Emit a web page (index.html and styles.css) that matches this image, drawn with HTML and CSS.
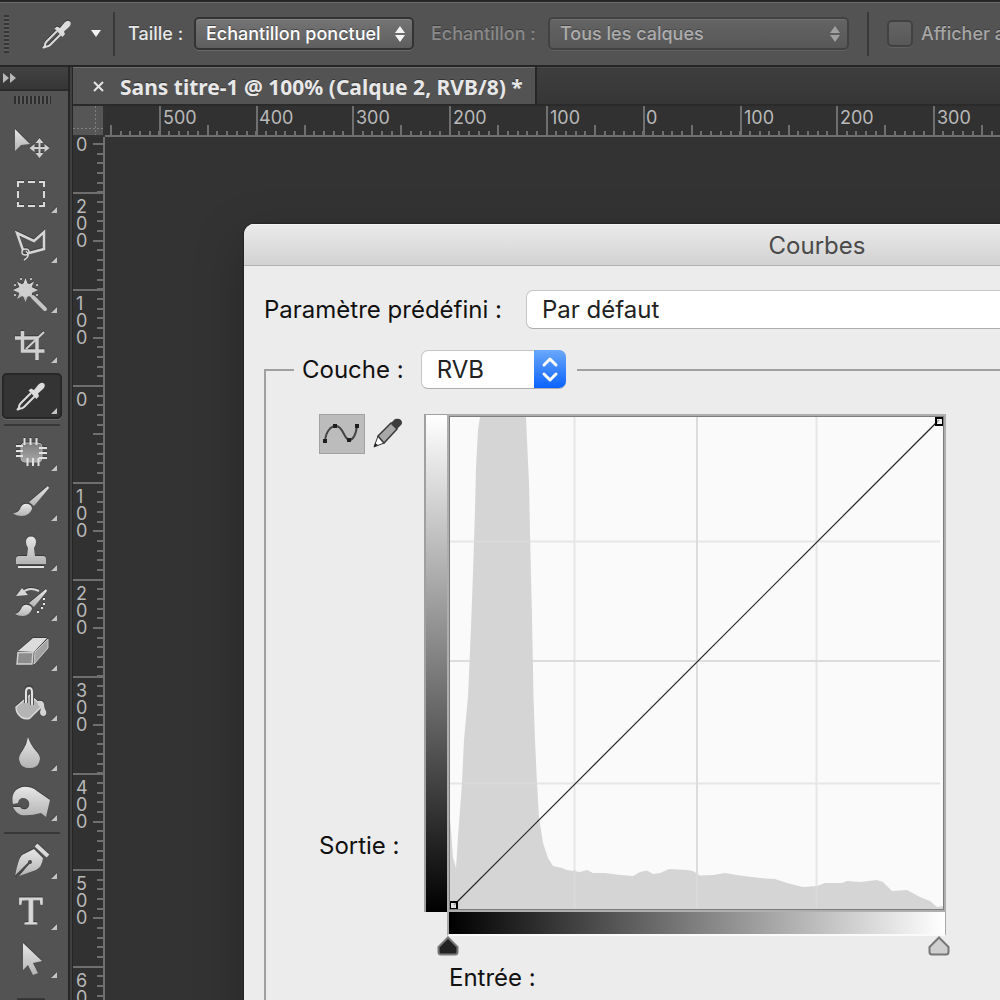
FILE: index.html
```html
<!DOCTYPE html>
<html lang="fr">
<head>
<meta charset="utf-8">
<title>Courbes</title>
<link rel="stylesheet" href="styles.css">
</head>
<body>
<svg class="defs" aria-hidden="true">
  <defs>
    <linearGradient id="metal" x1="0" y1="0" x2="0" y2="1">
      <stop offset="0" stop-color="#e6e6e6"/><stop offset="1" stop-color="#b4b4b4"/>
    </linearGradient>
    <linearGradient id="metalDim" x1="0" y1="0" x2="0" y2="1">
      <stop offset="0" stop-color="#7c7c7c"/><stop offset="1" stop-color="#a8a8a8"/>
    </linearGradient>
    <symbol id="pipette" viewBox="0 0 30 30">
      <path d="M15 12 4.5 22.500Q3 24 3 26.500L1.500 28.500 4.500 27.500Q6.500 27.500 8 26L18.500 15.500" fill="none" stroke="#dcdcdc" stroke-width="2" stroke-linejoin="round"/>
      <path d="M12.500 9.500 15 7.500 18 9 22.500 3.500Q25.500 .5 28 2.500 30 5 27 8L22 12.500 23 15 20.500 18Z" fill="#dcdcdc"/>
    </symbol>
    <symbol id="more" viewBox="0 0 6 6"><path d="M6 0V6H0Z" fill="#c4c4c4"/></symbol>
  </defs>
</svg>

<header class="options">
  <span class="grip-v"></span>
  <button class="current-tool" aria-label="Pipette"><svg width="30" height="30"><use href="#pipette"/></svg></button>
  <button class="tool-menu" aria-label="Formes prédéfinies"><svg width="10" height="7"><path d="M0 0H10L5 7Z" fill="#f2f2f2"/></svg></button>
  <span class="divider"></span>
  <label class="opt-label" for="taille">Taille :</label>
  <span class="opt-select opt-select-size">
    <select id="taille"><option>Echantillon ponctuel</option></select>
    <svg class="updown" width="10" height="16"><path d="M0 7 5 0 10 7ZM0 9H10L5 16Z"/></svg>
  </span>
  <label class="opt-label off" for="echantillon">Echantillon :</label>
  <span class="opt-select opt-select-sample off">
    <select id="echantillon" disabled><option>Tous les calques</option></select>
    <svg class="updown" width="10" height="16"><path d="M0 7 5 0 10 7ZM0 9H10L5 16Z"/></svg>
  </span>
  <span class="divider"></span>
  <label class="opt-check"><input type="checkbox" disabled>Afficher anneau d’échantillonnage</label>
</header>

<div class="main">
  <nav class="toolbox" aria-label="Outils">
    <button class="collapse" aria-label="Agrandir le panneau"><svg width="13" height="10"><path d="M0 0 6 5 0 10ZM7 0 13 5 7 10Z" fill="#b8b8b8"/></svg></button>
    <span class="grip-h"></span>
    <button class="tool" aria-label="Déplacement"><svg width="60" height="46">
      <path d="M13 6V28L19 22 28 21Z" fill="url(#metal)"/>
      <path d="M37.500 17V33M29.500 25H45.500" stroke="#d0d0d0" stroke-width="2"/>
      <path d="M37.500 15 41.500 20H33.500ZM37.500 35 41.500 30H33.500ZM27.500 25 32.500 21V29ZM47.500 25 42.500 21V29Z" fill="#d0d0d0"/>
    </svg></button>
    <button class="tool" aria-label="Rectangle de sélection"><svg width="60" height="46">
      <path d="M16 14V9H22M26 9H33M37 9H42V14M42 18V25M42 29V33H37M33 33H26M22 33H16V29M16 25V18" fill="none" stroke="#dadada" stroke-width="2"/>
      <use href="#more" x="49" y="34" width="6" height="6"/>
    </svg></button>
    <button class="tool" aria-label="Lasso polygonal"><svg width="60" height="46">
      <path d="M21 27 15 10 32 18 42 9V26L27 30" fill="none" stroke="#d6d6d6" stroke-width="2.500"/>
      <path d="M20 29Q20 26 23.500 26T27 29 23.500 32 20 29ZM24 28Q29 33 22 37" fill="none" stroke="#d6d6d6" stroke-width="1.500"/>
      <use href="#more" x="49" y="34" width="6" height="6"/>
    </svg></button>
    <button class="tool" aria-label="Baguette magique"><svg width="60" height="46">
      <path d="M23.500 5 26 12 32 8.500 29.500 14 36 17 29.500 20 32 26 26 22.500 23.500 29 21 22.500 15 26 17.500 20 11 17 17.500 14 15 8.500 21 12Z" fill="url(#metal)"/>
      <circle cx="23.500" cy="17" r="7" fill="#cfcfcf"/>
      <path d="M31 24 43 36" stroke="#c4c4c4" stroke-width="4" stroke-linecap="round"/>
      <path d="M18 6h2M28 6h2M34 12h2M34 22h2M12 12h2M12 22h2" stroke="#dcdcdc" stroke-width="1.500"/>
      <use href="#more" x="49" y="34" width="6" height="6"/>
    </svg></button>
    <button class="tool" aria-label="Recadrage"><svg width="60" height="46">
      <path d="M20.500 8V28H42.500M13 15H35V37" fill="none" stroke="#d0d0d0" stroke-width="3.500"/>
      <path d="M42 9 24 26" stroke="#d0d0d0" stroke-width="2"/>
      <use href="#more" x="49" y="34" width="6" height="6"/>
    </svg></button>
    <button class="tool active" aria-label="Pipette" aria-pressed="true"><svg width="60" height="46">
      <use href="#pipette" x="14" y="8" width="30" height="30"/>
      <use href="#more" x="49" y="35" width="6" height="6"/>
    </svg></button>
    <span class="tool-rule"></span>
    <button class="tool" aria-label="Pièce"><svg width="60" height="46">
      <rect x="19" y="12" width="21" height="19" rx="4" fill="url(#metalDim)" stroke="#b5b5b5"/>
      <path d="M22.500 7V14M28.500 7V14M34.500 7V14M25.500 27V35M31 27V35M36.500 27V35M14 15H21M14 20H21M14 25H21M37 17H45M37 22H45M37 27H45" stroke="#e2e2e2" stroke-width="2"/>
      <use href="#more" x="49" y="34" width="6" height="6"/>
    </svg></button>
    <button class="tool" aria-label="Pinceau"><svg width="60" height="46">
      <path d="M46 5 47 7 32 25 27 21Z" fill="url(#metal)"/>
      <path d="M26 23Q30 24 30 28 27 35 20 35 14 35 11 32 16 32 18 28 20 22 26 23Z" fill="url(#metal)"/>
      <use href="#more" x="49" y="34" width="6" height="6"/>
    </svg></button>
    <button class="tool" aria-label="Tampon"><svg width="60" height="46">
      <path d="M29 5.500Q34 5.500 34 11 34 14 32 17L33 25H41Q44 25 44 28V33H14V28Q14 25 17 25H25L26 17Q24 14 24 11 24 5.500 29 5.500Z" fill="url(#metal)"/>
      <path d="M16 36H42" stroke="#e4e4e4" stroke-width="2"/>
      <use href="#more" x="49" y="34" width="6" height="6"/>
    </svg></button>
    <button class="tool" aria-label="Forme d’historique"><svg width="60" height="46">
      <path d="M44 8 45 10 32 26 27 22Z" fill="url(#metal)"/>
      <path d="M26 24Q30 25 30 28 27 35 21 35 16 35 13 33 17 32 19 28 21 23 26 24Z" fill="url(#metal)"/>
      <path d="M20 12Q27 5 37 10" fill="none" stroke="#d8d8d8" stroke-width="2"/>
      <path d="M20 7 14 15 26 14Z" fill="#d8d8d8"/>
      <path d="M41 18h2M41 23h2M39 27h2M35 31h2" stroke="#e8e8e8" stroke-width="2"/>
      <use href="#more" x="49" y="34" width="6" height="6"/>
    </svg></button>
    <button class="tool" aria-label="Gomme"><svg width="60" height="46">
      <path d="M16 20 31 7H45L32 21Z" fill="#dcdcdc"/>
      <path d="M46 8V17L32 33 33 21Z" fill="#a2a2a2" stroke="#cdcdcd"/>
      <path d="M16 21.500H31L30 33H15Z" fill="#8c8c8c" stroke="#cfcfcf" stroke-width="1.500"/>
      <use href="#more" x="49" y="34" width="6" height="6"/>
    </svg></button>
    <button class="tool" aria-label="Pot de peinture"><svg width="60" height="46">
      <path d="M28 14 14 26Q14 32 19 36 24 39 28 37L40 25Z" fill="#b4b4b4" stroke="#dadada" stroke-width="1.500"/>
      <path d="M24 22V11Q24 7 27 7T30 11V24" fill="none" stroke="#555" stroke-width="4"/>
      <path d="M24 22V11Q24 7 27 7T30 11V24" fill="none" stroke="#e2e2e2" stroke-width="2"/>
      <path d="M36 20Q41 19 42 23 42 27 44 30 45 34 42 35 38 35 38 31 40 26 36 24Z" fill="#d4d4d4"/>
      <use href="#more" x="49" y="34" width="6" height="6"/>
    </svg></button>
    <button class="tool" aria-label="Goutte d’eau"><svg width="60" height="46">
      <path d="M26 6Q28 13 34 20 38 24 38 28 37 37 27.500 37 18 37 17 28 17 24 21 19 25 13 26 6Z" fill="url(#metal)"/>
      <use href="#more" x="49" y="34" width="6" height="6"/>
    </svg></button>
    <button class="tool" aria-label="Densité +"><svg width="60" height="46">
      <path d="M20 6Q29 5 35 10L48 19 44 36 39 32Q28 35 19 34 13 31 11 26H18Q20 29 24 28 28 26 27 21 25 17 21 17 17 17 16 22L11 23Q9 14 14 9 17 7 20 6Z" fill="url(#metal)"/>
      <use href="#more" x="49" y="34" width="6" height="6"/>
    </svg></button>
    <span class="tool-rule"></span>
    <button class="tool" aria-label="Plume"><svg width="60" height="46">
      <path d="M13 37Q16 20 20 16L32 10 41 19Q40 28 34 31L17 37 28 24" fill="url(#metal)"/>
      <path d="M13 38 28 23" stroke="#4a4a4a" stroke-width="2"/><circle cx="28" cy="23" r="2" fill="#4a4a4a"/>
      <path d="M34 6 46 17" stroke="#dadada" stroke-width="4"/>
      <use href="#more" x="49" y="34" width="6" height="6"/>
    </svg></button>
    <button class="tool" aria-label="Texte"><svg width="60" height="46">
      <text class="tool-letter" x="29" y="35" text-anchor="middle">T</text>
      <use href="#more" x="49" y="35" width="6" height="6"/>
    </svg></button>
    <button class="tool" aria-label="Sélection de tracé"><svg width="60" height="46">
      <path d="M21 4V31L26 26 31 36 36 34 31 24 40 22Z" fill="url(#metal)"/>
      <use href="#more" x="49" y="33" width="6" height="6"/>
    </svg></button>
    <button class="tool" aria-label="Rectangle"><svg width="60" height="46"><rect x="16" y="11" width="26" height="24" fill="#c8c8c8" stroke="#333" stroke-width="2"/></svg></button>
  </nav>

  <main class="workspace">
    <div class="tabs">
      <div class="tab">
        <button class="tab-close" aria-label="Fermer"><svg width="11" height="11"><path d="M1 1 10 10M10 1 1 10" stroke="#e4e4e4" stroke-width="2"/></svg></button>
        <span>Sans titre-1 @ 100% (Calque 2, RVB/8) *</span>
      </div>
    </div>
    <div class="document">
      <div class="corner"></div>
      <svg class="ruler ruler-x" height="31">
        <g class="ticks">
          <path d="M-43 14.500H3000" stroke-width="29" stroke-dasharray="2 94.800"/>
          <path d="M5 24H3000" stroke-width="10" stroke-dasharray="2 94.800"/>
          <path d="M5 27H3000" stroke-width="5" stroke-dasharray="2 7.680"/>
          <path d="M0 30H3000" stroke-width="2"/>
        </g>
        <text x="58" y="18">500</text><text x="154" y="18">400</text><text x="251" y="18">300</text>
        <text x="348" y="18">200</text><text x="445" y="18">100</text><text x="541" y="18">0</text>
        <text x="639" y="18">100</text><text x="735" y="18">200</text><text x="832" y="18">300</text>
      </svg>
      <svg class="ruler ruler-y" width="32">
        <g class="ticks">
          <path d="M15 -42V3000" stroke-width="30" stroke-dasharray="2 94.800"/>
          <path d="M25 6V3000" stroke-width="10" stroke-dasharray="2 94.800"/>
          <path d="M27 6V3000" stroke-width="6" stroke-dasharray="2 7.680"/>
          <path d="M31 0V3000" stroke-width="2"/>
        </g>
        <text><tspan x="3" y="14">0</tspan></text>
        <text><tspan x="3" y="76">2</tspan><tspan x="3" y="93">0</tspan><tspan x="3" y="110">0</tspan></text>
        <text><tspan x="3" y="173">1</tspan><tspan x="3" y="190">0</tspan><tspan x="3" y="207">0</tspan></text>
        <text><tspan x="3" y="269">0</tspan></text>
        <text><tspan x="3" y="366">1</tspan><tspan x="3" y="383">0</tspan><tspan x="3" y="400">0</tspan></text>
        <text><tspan x="3" y="463">2</tspan><tspan x="3" y="480">0</tspan><tspan x="3" y="497">0</tspan></text>
        <text><tspan x="3" y="560">3</tspan><tspan x="3" y="577">0</tspan><tspan x="3" y="594">0</tspan></text>
        <text><tspan x="3" y="657">4</tspan><tspan x="3" y="674">0</tspan><tspan x="3" y="691">0</tspan></text>
        <text><tspan x="3" y="753">5</tspan><tspan x="3" y="770">0</tspan><tspan x="3" y="787">0</tspan></text>
        <text><tspan x="3" y="850">6</tspan><tspan x="3" y="867">0</tspan><tspan x="3" y="884">0</tspan></text>
      </svg>
      <div class="canvas">
        <section class="dialog" role="dialog" aria-labelledby="dialog-title">
          <h1 class="dialog-title" id="dialog-title">Courbes</h1>
          <form class="dialog-body">
            <div class="preset">
              <label for="preset">Paramètre prédéfini :</label>
              <select class="mac-select preset-select" id="preset"><option>Par défaut</option></select>
            </div>
            <fieldset class="channel">
              <legend>
                <label for="couche">Couche :</label>
                <span class="channel-select">
                  <select class="mac-select" id="couche"><option>RVB</option></select>
                  <svg class="stepper" width="32" height="38"><path d="M10 15 16 9 22 15M10 24 16 30 22 24" fill="none" stroke="#fff" stroke-width="3" stroke-linecap="round" stroke-linejoin="round"/></svg>
                </span>
              </legend>
              <div class="curve">
                <div class="side">
                  <div class="modes">
                    <button type="button" class="mode pressed" aria-label="Modifier les points"><svg width="44" height="38">
                      <path d="M5 26C6 16 11 11 16 11 23 11 24 24 29 25 34 25 36 18 37 11" fill="none" stroke="#444" stroke-width="2"/>
                      <path d="M3 24h4v4h-4zM13 9h4v4h-4zM27 23h4v4h-4zM35 9h4v4h-4z" fill="#1e1e1e"/>
                    </svg></button>
                    <button type="button" class="mode" aria-label="Dessiner la courbe"><svg width="32" height="32">
                      <path d="M2 30 6 19 12 26Z" fill="#fff" stroke="#333"/><path d="M2 30 3 26 6 28Z" fill="#222"/>
                      <path d="M6 19 19 6 25 12 12 26Z" fill="#a8a8a8" stroke="#3c3c3c" stroke-width="1.500"/>
                      <path d="M19 6 23 2Q27 1 29 3 31 6 29 8L25 12Z" fill="#3c3c3c"/>
                    </svg></button>
                  </div>
                  <span>Sortie :</span>
                </div>
                <div class="graph">
                  <div class="output-bar"></div>
                  <div class="plot-frame">
                    <svg class="plot" viewBox="450 417 493 492" role="img" aria-label="Histogramme et courbe">
                      <path class="grid" d="M574.500 417V909M816.500 417V909M450 541.500H940M450 783.500H940"/>
                      <path class="grid mid" d="M697 417V909M450 661H940"/>
                      <path class="histogram" d="M450 820L451 830 453 857 456 868 458 837 462 783 464 740 468 697 471 627 473 573 475 510 476 467 478 430 480 417H526L527 440 529 483 530 533 532 617 533.500 697 535 740 537 783 539 817 543 843 548 858 553 866 562 868 567 870 580 872 587 870 593 873 605 873 620 875 633 876 640 872 647 870.500 653 874 660 873 669 869 687 870 693 871 700 875.500 713 875 725 873 740 875.500 760 878 775 879 787 883 803 887 817 886 825 883 842 883 847 881 860 882 877 880 883 882 892 891 907 890 920 897 930 901 937 907 943 906V909H450Z"/>
                      <path class="grid-over" d="M574.500 870V909M697 873V909M816.500 886V909M474 541.500H530M463 783.500H537"/>
                      <path d="M454 905 939 420" stroke="#222" stroke-width="1.200"/>
                      <path d="M450 902h7v7h-7zM936 418h7v7h-7z" fill="#e8e8e8" fill-opacity=".6" stroke="#000" stroke-width="2"/>
                    </svg>
                  </div>
                  <div class="input-bar"></div>
                  <div class="points">
                    <input class="point black" type="range" min="0" max="255" value="0" aria-label="Point noir">
                    <input class="point white" type="range" min="0" max="255" value="255" aria-label="Point blanc">
                  </div>
                  <span class="input-label">Entrée :</span>
                </div>
              </div>
            </fieldset>
          </form>
        </section>
      </div>
    </div>
  </main>
</div>
</body>
</html>
```
FILE: styles.css
```css
* { box-sizing: border-box; }

body {
  margin: 0;
  height: 100vh;
  display: flex;
  flex-direction: column;
  overflow: hidden;
  background: #333;
  color: #e8e8e8;
  font-family: Inter, "Liberation Sans", sans-serif;
  font-size: 18px;
}

button, select, input { font: inherit; color: inherit; margin: 0; }
button { padding: 0; border: 0; background: none; display: grid; place-items: center; }
select { appearance: none; }
svg { display: block; }
.defs { position: absolute; width: 0; height: 0; }

/* Options bar */
.options {
  flex: none;
  height: 67px;
  padding: 0 0 0 4px;
  display: flex;
  align-items: center;
  overflow: hidden;
  border-top: 2px solid #262626;
  border-bottom: 2px solid #262626;
  background: #535353;
  box-shadow: inset 0 1px #6e6e6e;
  font-weight: 500;
  white-space: nowrap;
  text-shadow: 0 -1px #3a3a3a;
}
.options > * { flex: none; }
.grip-v { width: 5px; height: 38px; background: repeating-linear-gradient(#363636 0 2px, #5c5c5c 2px 4px); }
.current-tool { margin-left: 33px; filter: drop-shadow(0 -1px 0 #333); }
.tool-menu { margin-left: 19px; }
.divider { width: 2px; height: 44px; margin-left: 12px; background: #393939; }
.opt-label { margin-left: 13px; width: 66px; }
.opt-label.off { margin-left: 17px; width: 117px; color: #8a8a8a; }
.opt-select { position: relative; }
.opt-select select {
  width: 100%;
  height: 33px;
  padding: 0 10px;
  border: 2px solid #333;
  border-radius: 5px;
  background: linear-gradient(#747474, #5e5e5e);
  box-shadow: 0 1px #6a6a6a, inset 0 1px #858585;
  color: #fff;
  text-shadow: 0 -1px #444;
}
.opt-select-size { width: 220px; }
.opt-select-sample { width: 301px; }
.opt-select.off select { border-color: #424242; background: linear-gradient(#646464, #575757); box-shadow: 0 1px #616161, inset 0 1px #707070; color: #adadad; opacity: 1; }
.updown { position: absolute; right: 9px; top: 9px; fill: #f4f4f4; pointer-events: none; }
.off .updown { fill: #a0a0a0; }
.opt-select-sample + .divider { margin-left: 18px; }
.opt-check { display: flex; align-items: center; gap: 8px; margin-left: 18px; color: #a6a6a6; }
.opt-check input { appearance: none; width: 26px; height: 27px; border: 2px solid #424242; border-radius: 5px; background: linear-gradient(#646464, #585858); box-shadow: 0 1px #616161; }

.main { flex: 1; min-height: 0; display: flex; }

/* Toolbox */
.toolbox {
  flex: none;
  width: 73px;
  display: flex;
  flex-direction: column;
  align-items: flex-start;
  gap: 4px;
  overflow: hidden;
  background: linear-gradient(90deg, #535353 68px, #262626 68px 70px, #404040 70px 72px, #262626 72px);
}
.collapse { flex: none; width: 68px; height: 24px; padding-left: 3px; justify-items: start; border-bottom: 2px solid #2a2a2a; background: linear-gradient(#424242, #363636); }
.grip-h { flex: none; width: 37px; height: 8px; margin: 1px 0 15px 14px; background: repeating-linear-gradient(90deg, #2e2e2e 0 2px, #5c5c5c 2px 4px); }
.tool { flex: none; width: 60px; height: 46px; margin-left: 2px; border-radius: 5px; filter: drop-shadow(0 -1px 0 #3a3a3a); }
.tool.active { background: #343434; box-shadow: inset 0 0 0 2px #272727; filter: drop-shadow(0 1px 0 #6a6a6a); }
.tool-letter { font: 39px "Liberation Serif", serif; fill: #d8d8d8; stroke: #d8d8d8; }
.tool-rule { flex: none; width: 56px; height: 2px; margin: 1px 0 1px 4px; background: #383838; }

/* Document window */
.workspace { flex: 1; min-width: 0; display: flex; flex-direction: column; }
.tabs { flex: none; height: 39px; display: flex; background: linear-gradient(#3e3e3e, #363636); border-bottom: 2px solid #2a2a2a; box-shadow: inset 0 1px #4a4a4a; }
.tab {
  width: 464px;
  padding: 2px 0 0 20px;
  display: flex;
  align-items: center;
  gap: 16px;
  border-right: 2px solid #262626;
  background: #535353;
  box-shadow: inset 0 1px #6e6e6e;
  font-family: "Noto Sans", sans-serif;
  font-size: 21px;
  line-height: 28px;
  font-weight: 700;
  text-shadow: 0 -1px #333;
  white-space: nowrap;
}
.document { flex: 1; min-height: 0; display: grid; grid-template: 31px 1fr / 32px 1fr; }
.corner {
  margin: 0 2px 2px 0;
  background:
    repeating-linear-gradient(#808080 0 2px, transparent 2px 4px) 22px 0 / 1px 100% no-repeat,
    repeating-linear-gradient(90deg, #808080 0 2px, transparent 2px 4px) 0 22px / 100% 1px no-repeat,
    #565656;
}
.ruler { overflow: hidden; background: #313131; fill: #b9b9b9; }
.ruler-x { width: 100%; }
.ruler-y { height: 100%; }
.ticks { fill: none; stroke: #6f6f6f; shape-rendering: crispEdges; }
.canvas { min-width: 0; overflow: hidden; padding: 87px 0 0 139px; background: #333; }

/* Curves dialog */
.dialog {
  width: 1146px;
  border-radius: 10px 10px 0 0;
  overflow: hidden;
  background: #ececec;
  box-shadow: 0 0 2px #111, 0 16px 50px rgba(0, 0, 0, .25);
  color: #111;
  font-size: 24px;
  line-height: 28px;
}
.dialog-title {
  margin: 0;
  height: 42px;
  padding-top: 8px;
  border-bottom: 1px solid #b0b0b0;
  background: linear-gradient(#ebebeb, #d2d2d2);
  box-shadow: inset 0 1px #f6f6f6;
  color: #4a4a4a;
  font-size: 24px;
  font-weight: 400;
  text-align: center;
}
.dialog-body { padding: 24px 20px 60px; }
.preset { display: flex; align-items: center; gap: 24px; }
.mac-select {
  width: 100%;
  height: 39px;
  padding: 0 15px;
  border: 1px solid #c6c6c6;
  border-bottom-color: #adadad;
  border-radius: 7px;
  background: #fff;
  color: #222;
}
.preset-select { flex: 1; }
.channel { min-width: 0; margin: 21px 0 0; padding: 25px 0 60px 28px; border: 2px solid #a0a0a0; }
.channel legend { display: flex; align-items: center; gap: 17px; padding: 0 11px 0 8px; }
.channel-select { position: relative; width: 145px; }
.stepper { position: absolute; right: 0; top: 0; border-radius: 0 7px 7px 0; background: linear-gradient(#6aa8fb, #0a63fb); pointer-events: none; }

.curve { display: flex; padding-left: 25px; }
.side { width: 105px; height: 498px; padding-bottom: 52px; display: flex; flex-direction: column; justify-content: space-between; }
.modes { display: flex; gap: 7px; }
.mode { height: 38px; }
.mode.pressed { width: 46px; height: 40px; border: 1px solid #a2a2a2; background: #bcbcbc; }
.graph { display: grid; grid-template-columns: 23px 499px; }
.output-bar { border: 1px solid #a0a0a0; border-width: 1px 0 0 2px; background: linear-gradient(#fff, #000); }
.plot-frame { border: 2px solid #aeaeae; }
.plot { width: 100%; border: 1px solid #7d7d7d; background: #fafafa; }
.grid { fill: none; stroke: #e6e6e6; stroke-width: 2; }
.grid.mid { stroke: #dcdcdc; }
.grid-over { fill: none; stroke: #dadada; stroke-width: 2; }
.histogram { fill: #d5d5d5; }
.input-bar {
  grid-column: 2;
  height: 24px;
  border: 1px solid #a8a8a8;
  border-width: 0 1px 2px 2px;
  border-bottom-color: #fafafa;
  background: linear-gradient(90deg, #000, #fff);
}
.points { grid-column: 1 / -1; margin: 0 -4px 0 13px; display: grid; }
.point { appearance: none; grid-area: 1 / 1; width: 100%; height: 20px; background: none; pointer-events: none; }
.point::-webkit-slider-thumb { appearance: none; width: 22px; height: 20px; pointer-events: auto; }
.black::-webkit-slider-thumb { background: url("data:image/svg+xml,%3Csvg xmlns='http://www.w3.org/2000/svg' width='22' height='20'%3E%3Cpath d='M11 1.500 20.500 11V16Q20.500 18.500 18 18.500H4Q1.500 18.500 1.500 16V11Z' fill='%23222' stroke='%23777' stroke-width='2'/%3E%3C/svg%3E"); }
.white::-webkit-slider-thumb { background: url("data:image/svg+xml,%3Csvg xmlns='http://www.w3.org/2000/svg' width='22' height='20'%3E%3Cpath d='M11 1.500 20.500 11V16Q20.500 18.500 18 18.500H4Q1.500 18.500 1.500 16V11Z' fill='%23cfcfcf' stroke='%23777' stroke-width='2'/%3E%3C/svg%3E"); }
.input-label { grid-column: 2; margin-top: 8px; padding-left: 2px; }
```
